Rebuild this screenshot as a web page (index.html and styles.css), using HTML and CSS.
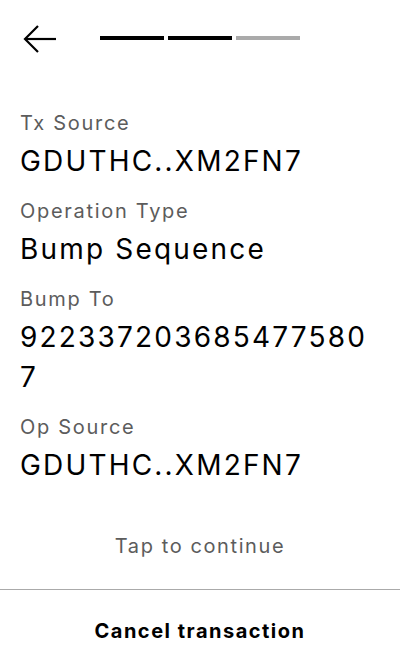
FILE: index.html
```html
<!DOCTYPE html>
<html lang="en">
<head>
<meta charset="utf-8">
<title>Bump Sequence</title>
<link rel="stylesheet" href="styles.css">
</head>
<body>
<div class="screen">
  <header class="topbar">
    <button class="back" aria-label="Back">
      <svg width="40" height="40" viewBox="0 0 40 40" fill="none" stroke="#000" stroke-width="2.2" stroke-linecap="butt" stroke-linejoin="miter">
        <path d="M5 20 H36"/>
        <path d="M18 7 L5 20 L18 33"/>
      </svg>
    </button>
    <div class="steps">
      <span class="step done"></span>
      <span class="step done"></span>
      <span class="step"></span>
    </div>
  </header>
  <main class="fields">
    <div class="field">
      <div class="label">Tx Source</div>
      <div class="value">GDUTHC..XM2FN7</div>
    </div>
    <div class="field">
      <div class="label">Operation Type</div>
      <div class="value">Bump Sequence</div>
    </div>
    <div class="field">
      <div class="label">Bump To</div>
      <div class="value">9223372036854775807</div>
    </div>
    <div class="field">
      <div class="label">Op Source</div>
      <div class="value">GDUTHC..XM2FN7</div>
    </div>
  </main>
  <footer class="footer">
    <div class="tap">Tap to continue</div>
    <button class="cancel">Cancel transaction</button>
  </footer>
</div>
</body>
</html>
```

FILE: styles.css
```css
* { box-sizing: border-box; }
html, body { margin: 0; padding: 0; background: #fff; }
body {
  font-family: Inter, "Noto Sans", sans-serif;
  color: #000;
}
.screen {
  height: 672px;
  display: flex;
  flex-direction: column;
}
.topbar {
  height: 78px;
  display: flex;
  align-items: center;
  padding-left: 20px;
}
.back {
  width: 40px;
  height: 40px;
  padding: 0;
  border: 0;
  background: none;
  display: flex;
}
.steps {
  display: flex;
  gap: 4px;
  margin-left: 40px;
  margin-top: -2px;
}
.step {
  width: 64px;
  height: 4px;
  background: #aaaaaa;
}
.step.done { background: #000; }
.fields {
  padding: 31px 20px 0;
  display: flex;
  flex-direction: column;
  gap: 16px;
}
.field {
  display: flex;
  flex-direction: column;
  gap: 4px;
}
.label {
  font-size: 20px;
  line-height: 28px;
  letter-spacing: 0.085em;
  color: #5c5c5c;
}
.value {
  font-size: 28px;
  line-height: 40px;
  letter-spacing: 0.078em;
  color: #000;
  word-break: break-all;
}
.footer {
  margin-top: auto;
  display: flex;
  flex-direction: column;
}
.tap {
  text-align: center;
  font-size: 20px;
  line-height: 28px;
  letter-spacing: 0.08em;
  color: #5c5c5c;
  margin-bottom: 29px;
}
.cancel {
  height: 83px;
  border: 0;
  border-top: 1px solid #aaaaaa;
  background: #fff;
  font-family: Inter, "Noto Sans", sans-serif;
  font-size: 20px;
  font-weight: 700;
  letter-spacing: 0.075em;
  color: #000;
  padding: 0;
}
```
